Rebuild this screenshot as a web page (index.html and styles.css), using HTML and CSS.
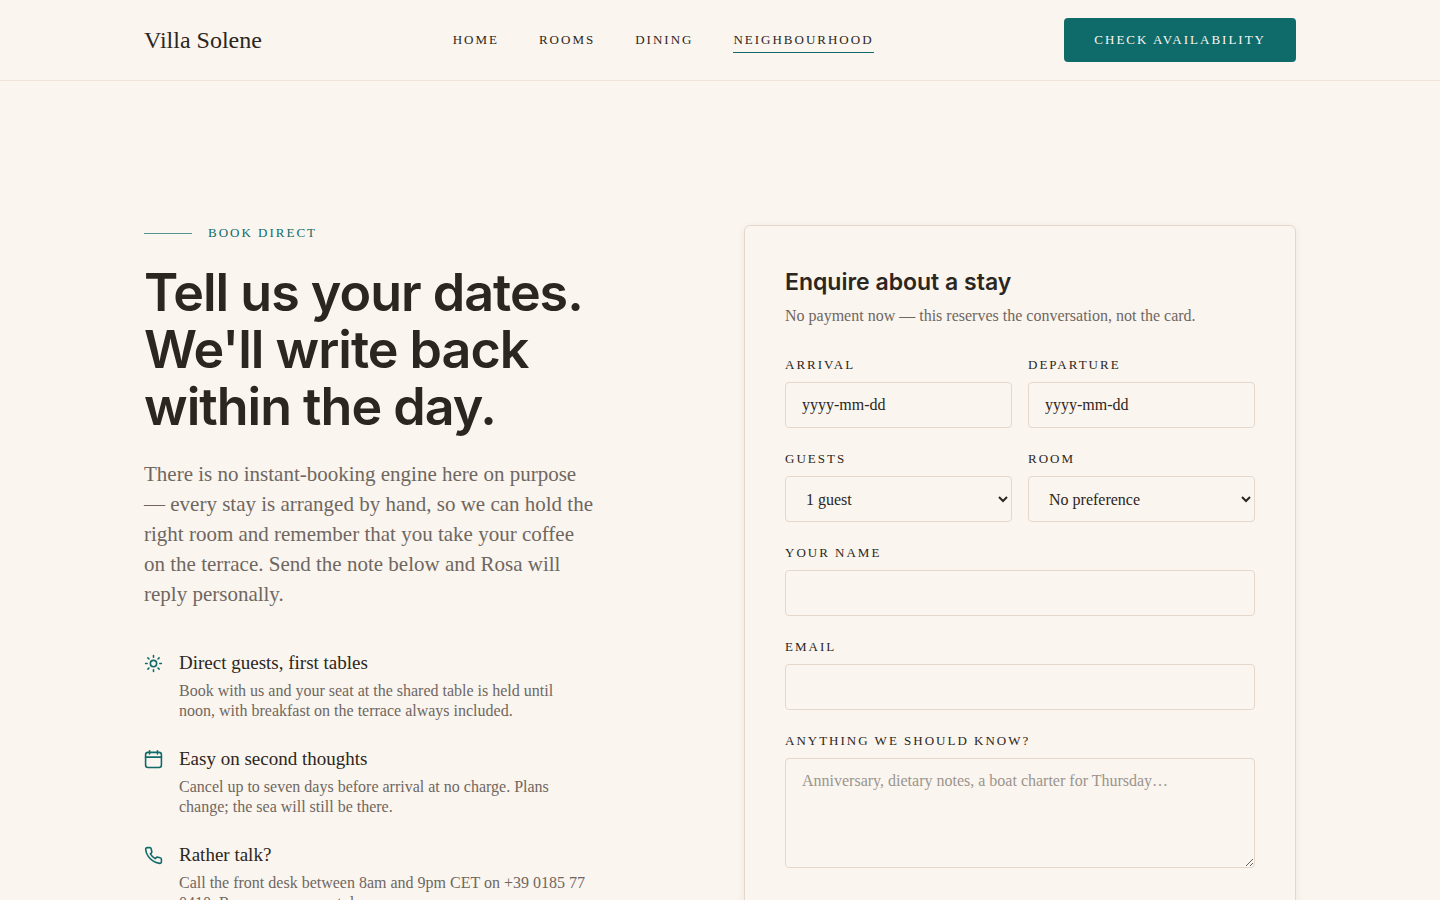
FILE: index.html
```html
<!DOCTYPE html>
<html lang="en">

<head>
    <meta charset="UTF-8">
    <meta name="viewport" content="width=device-width, initial-scale=1.0">
    <title>Villa Solene - Book direct</title>
    <link rel="stylesheet" href="styles.css">
</head>

<body>
    <header class="site-header">
        <div class="container header-inner">
            <a class="logo" href="#">Villa Solene</a>
            <nav class="main-nav">
                <a href="#">Home</a>
                <a href="#">Rooms</a>
                <a href="#">Dining</a>
                <a class="active" href="#">Neighbourhood</a>
            </nav>
            <button class="btn" type="button">Check availability</button>
        </div>
    </header>

    <main class="container booking">
        <section class="intro">
            <p class="eyebrow">Book direct</p>
            <h1>Tell us your dates. We'll write back within the day.</h1>
            <p class="lead">There is no instant-booking engine here on purpose — every stay is arranged by hand, so we can hold the right room and remember that you take your coffee on the terrace. Send the note below and Rosa will reply personally.</p>

            <ul class="features">
                <li>
                    <svg class="icon" viewBox="0 0 24 24" aria-hidden="true">
                        <circle cx="12" cy="12" r="4" />
                        <path d="M12 2v2M12 20v2M4.9 4.9l1.4 1.4M17.7 17.7l1.4 1.4M2 12h2M20 12h2M6.3 17.7l-1.4 1.4M19.1 4.9l-1.4 1.4" />
                    </svg>
                    <div>
                        <h3>Direct guests, first tables</h3>
                        <p>Book with us and your seat at the shared table is held until noon, with breakfast on the terrace always included.</p>
                    </div>
                </li>
                <li>
                    <svg class="icon" viewBox="0 0 24 24" aria-hidden="true">
                        <rect x="2" y="3" width="20" height="19" rx="3" />
                        <path d="M2 9h20M7 1v4M17 1v4" />
                    </svg>
                    <div>
                        <h3>Easy on second thoughts</h3>
                        <p>Cancel up to seven days before arrival at no charge. Plans change; the sea will still be there.</p>
                    </div>
                </li>
                <li>
                    <svg class="icon" viewBox="0 0 24 24" aria-hidden="true">
                        <path d="M22 16.92v3a2 2 0 0 1-2.18 2 19.79 19.79 0 0 1-8.63-3.07 19.5 19.5 0 0 1-6-6 19.79 19.79 0 0 1-3.07-8.67A2 2 0 0 1 4.11 2h3a2 2 0 0 1 2 1.72 12.84 12.84 0 0 0 .7 2.81 2 2 0 0 1-.45 2.11L8.09 9.91a16 16 0 0 0 6 6l1.27-1.27a2 2 0 0 1 2.11-.45 12.84 12.84 0 0 0 2.81.7A2 2 0 0 1 22 16.92z" />
                    </svg>
                    <div>
                        <h3>Rather talk?</h3>
                        <p>Call the front desk between 8am and 9pm CET on +39 0185 77 0410. Rosa answers most days.</p>
                    </div>
                </li>
            </ul>
        </section>

        <form class="card">
            <h2>Enquire about a stay</h2>
            <p class="card-note">No payment now — this reserves the conversation, not the card.</p>

            <div class="fields">
                <div class="field">
                    <label for="arrival">Arrival</label>
                    <input class="date" type="text" id="arrival" name="arrival" placeholder="yyyy-mm-dd">
                </div>
                <div class="field">
                    <label for="departure">Departure</label>
                    <input class="date" type="text" id="departure" name="departure" placeholder="yyyy-mm-dd">
                </div>
                <div class="field">
                    <label for="guests">Guests</label>
                    <select id="guests" name="guests">
                        <option>1 guest</option>
                        <option>2 guests</option>
                        <option>3 guests</option>
                    </select>
                </div>
                <div class="field">
                    <label for="room">Room</label>
                    <select id="room" name="room">
                        <option>No preference</option>
                    </select>
                </div>
                <div class="field wide">
                    <label for="name">Your name</label>
                    <input type="text" id="name" name="name">
                </div>
                <div class="field wide">
                    <label for="email">Email</label>
                    <input type="email" id="email" name="email">
                </div>
                <div class="field wide">
                    <label for="notes">Anything we should know?</label>
                    <textarea id="notes" name="notes" placeholder="Anniversary, dietary notes, a boat charter for Thursday…"></textarea>
                </div>
            </div>
            <button class="btn btn-block" type="submit">Send enquiry</button>
        </form>
    </main>
</body>

</html>
```

FILE: styles.css
```css
:root {
    --bg: #faf5ef;
    --ink: #2c2621;
    --muted: #6f675f;
    --teal: #0f6b6a;
    --line: #e5d8ca;
    --serif: "Liberation Serif", "Times New Roman", serif;
    --sans: Inter, "Liberation Sans", sans-serif;
}

* {
    box-sizing: border-box;
    margin: 0;
    padding: 0;
}

body {
    background: var(--bg);
    color: var(--ink);
    font-family: var(--serif);
    font-size: 16px;
    line-height: 20px;
}

.container {
    max-width: 1200px;
    margin: 0 auto;
    padding: 0 24px;
}

.site-header {
    border-bottom: 1px solid #f0e2d9;
}

.header-inner {
    display: flex;
    align-items: center;
    justify-content: space-between;
    padding-top: 18px;
    padding-bottom: 18px;
}

.logo {
    color: var(--ink);
    font-size: 24px;
    line-height: 32px;
    text-decoration: none;
}

.main-nav {
    display: flex;
    gap: 40px;
}

.main-nav a {
    padding: 3px 0;
    border-bottom: 1px solid transparent;
    color: var(--ink);
    font-size: 13px;
    line-height: 18px;
    letter-spacing: 2px;
    text-decoration: none;
    text-transform: uppercase;
}

.main-nav a.active {
    border-bottom-color: var(--teal);
}

.btn {
    height: 44px;
    padding: 0 30px;
    border: 0;
    border-radius: 4px;
    background: var(--teal);
    color: var(--bg);
    font-family: var(--serif);
    font-size: 13px;
    letter-spacing: 2px;
    text-transform: uppercase;
    cursor: pointer;
}

.booking {
    display: grid;
    grid-template-columns: 1fr 1fr;
    gap: 48px;
    align-items: start;
    padding-top: 144px;
    padding-bottom: 144px;
}

.intro {
    max-width: 452px;
}

.eyebrow {
    display: flex;
    align-items: center;
    gap: 16px;
    color: var(--teal);
    font-size: 13px;
    line-height: 16px;
    letter-spacing: 2px;
    text-transform: uppercase;
}

.eyebrow::before {
    content: "";
    width: 48px;
    height: 1px;
    background: var(--teal);
    opacity: 0.7;
}

h1 {
    margin-top: 23px;
    font-family: var(--sans);
    font-size: 52px;
    font-weight: 600;
    line-height: 57px;
    letter-spacing: -1px;
}

.lead {
    margin-top: 24px;
    color: var(--muted);
    font-size: 21px;
    line-height: 30px;
}

.features {
    display: grid;
    gap: 26px;
    margin-top: 42px;
    list-style: none;
}

.features li {
    display: flex;
    gap: 16px;
}

.icon {
    flex: none;
    width: 19px;
    height: 19px;
    margin-top: 3px;
    fill: none;
    stroke: var(--teal);
    stroke-width: 2;
    stroke-linecap: round;
    stroke-linejoin: round;
}

.features h3 {
    margin-bottom: 6px;
    font-size: 19px;
    font-weight: 400;
    line-height: 24px;
}

.features p {
    max-width: 408px;
    color: var(--muted);
}

.card {
    padding: 40px;
    border: 1px solid var(--line);
    border-radius: 6px;
    box-shadow: 0 2px 8px rgba(90, 60, 30, 0.07);
}

.card h2 {
    font-family: var(--sans);
    font-size: 23px;
    font-weight: 600;
    line-height: 32px;
}

.card-note {
    margin: 6px 0 30px;
    color: var(--muted);
    line-height: 24px;
}

.fields {
    display: grid;
    grid-template-columns: 1fr 1fr;
    gap: 24px 16px;
}

.field {
    display: flex;
    flex-direction: column;
    gap: 10px;
}

.wide {
    grid-column: 1 / -1;
}

.field label {
    font-size: 13px;
    line-height: 14px;
    letter-spacing: 2px;
    text-transform: uppercase;
}

.field input,
.field select,
.field textarea {
    width: 100%;
    height: 46px;
    padding: 0 16px;
    border: 1px solid var(--line);
    border-radius: 4px;
    background: transparent;
    color: var(--ink);
    font-family: var(--serif);
    font-size: 16px;
}

.field textarea {
    height: 110px;
    padding: 12px 16px;
    line-height: 20px;
    resize: vertical;
}

.field ::placeholder {
    color: #9b948c;
}

.field .date::placeholder {
    color: var(--ink);
}

.btn-block {
    width: 100%;
    margin-top: 40px;
}

@media (max-width: 860px) {
    .booking {
        grid-template-columns: 1fr;
        padding-top: 64px;
    }

    .header-inner {
        flex-wrap: wrap;
        gap: 16px;
    }
}
```
